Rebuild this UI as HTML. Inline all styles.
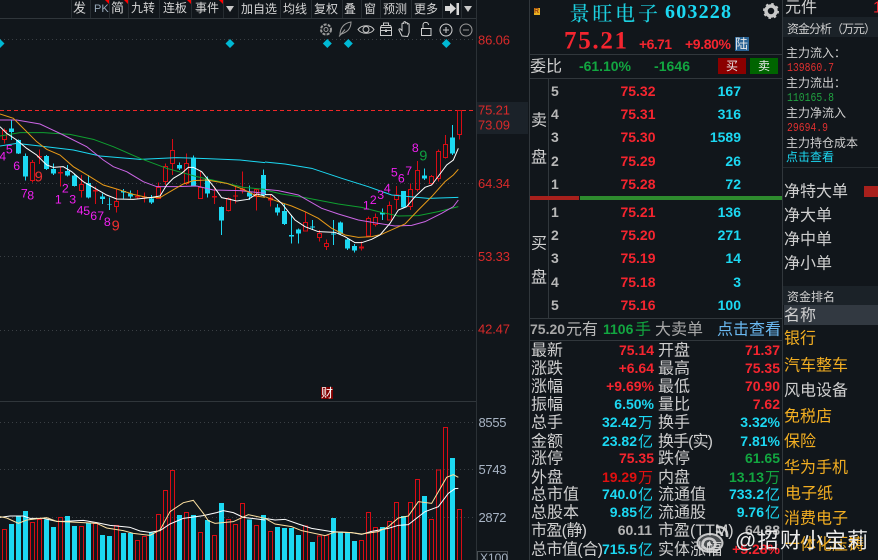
<!DOCTYPE html>
<html><head><meta charset="utf-8"><style>
html,body{margin:0;padding:0;background:#11161b;width:878px;height:560px;overflow:hidden}
svg{display:block;position:absolute;left:0;top:0}
text{font-family:"WenQuanYi Zen Hei","Liberation Sans","Noto Sans CJK SC",sans-serif;dominant-baseline:central;fill:#cfcfcf}
.n{font-family:"Liberation Sans",sans-serif;font-weight:700;font-size:14px}
.a{font-family:"Liberation Sans",sans-serif;font-size:13px;fill:#d82a2a}
.b{font-family:"Liberation Sans",sans-serif;font-size:13px;fill:#a8b4c4}
.r{fill:#f5252f}.c{fill:#1cd8f2}.g{fill:#12a640}.e{text-anchor:end}
.l{font-size:16px}.t{font-size:12px;fill:#d4d4d4}
.o{fill:#f2ae22;font-size:16px}
.u{font-size:15px}
.m{font-family:"Liberation Sans",sans-serif;font-size:37px;fill:#f020f0}
.s{font-size:12px;font-family:"Liberation Mono",monospace}
.h{font-size:12px}
</style></head><body>
<svg width="878" height="560" viewBox="0 0 878 560" xmlns="http://www.w3.org/2000/svg">
<rect width="878" height="560" fill="#11161b"/>
<!-- grid -->
<g stroke="#3a3f44" stroke-width="1" stroke-dasharray="1 3" fill="none">
<path d="M0 39.5H476M0 183.5H476M0 256.5H476M0 330.5H476M0 422.5H476M0 469.5H476M0 517.5H476"/>
</g>
<path d="M0 18.5H476M0 401.5H476" stroke="#30363b"/>
<path d="M476.5 0V560" stroke="#2b3136"/>
<rect x="477" y="102" width="51" height="32" fill="#1b2229"/>
<path d="M0 110.5H476" stroke="#f02828" stroke-dasharray="4 3"/>
<!-- toolbar -->
<path d="M71.500 0V18M90.500 0V18M109.500 0V18M128.500 0V18M159.500 0V18M191.500 0V18M223.500 0V18M238.500 0V18M280.500 0V18M311.500 0V18M342.500 0V18M361.500 0V18M380.500 0V18M411.500 0V18M442.500 0V18M461.500 0V18" stroke="#262c31"/>
<g>
<text class="t" x="73" y="8" style="font-size:13px">发</text>
<text x="94" y="9" style="font-size:11px;font-family:'Liberation Sans',sans-serif;fill:#9ab">PK</text>
<text class="t" x="111" y="8" style="font-size:13px">简</text>
<text class="t" x="131" y="8">九转</text>
<text class="t" x="163" y="8">连板</text><text class="t" x="195" y="8">事件</text>
<text class="t" x="241" y="9">加自选</text><text class="t" x="283" y="9">均线</text><text class="t" x="314" y="9">复权</text>
<text class="t" x="344" y="9">叠</text><text class="t" x="364" y="9">窗</text><text class="t" x="383" y="9">预测</text><text class="t" x="414" y="9">更多</text>
</g>
<path d="M105 0h4v4zM124 0h4v4zM187 0h4v4zM219 0h4v4" fill="#f00"/>
<path d="M226 6h8l-4 6zM464 6h8l-4 6z" fill="#c8c8c8"/>
<path d="M445 6h5v-3l6 5.500-6 5.500v-3h-5z" fill="#d8d8d8"/><rect x="456.500" y="3" width="2.500" height="12" fill="#d8d8d8"/>
<!-- tool icons -->
<g fill="none" stroke="#9a9a9a" stroke-width="1">
<circle cx="326" cy="29.500" r="5" stroke-width="2" stroke-dasharray="3 1.200"/><circle cx="326" cy="29.500" r="2"/>
<path d="M340 35c0-7 4-12 11-13 0 7-4 10-9.500 12z"/><path d="M339 36.500l6-7"/>
<path stroke="#c8c8c8" d="M358 29.500c3.500-5 13-5 16 0c-3 5-12.500 5-16 0z"/><circle stroke="#c8c8c8" cx="366" cy="29.500" r="3"/>
<path stroke="#c8c8c8" d="M380.500 27.500h11v8h-11zM380.500 27.500l1-2h9l1 2M383.500 25.500v-2.500h5v2.500M380.500 30.500h11M385.500 29.500v2h1v-2"/>
<path stroke="#d0d0d0" d="M402 36l-3-6c-.5-1.500 1-1.500 2-.5l1 1v-6.500c0-1.200 1.800-1.200 1.800 0v-1.500c0-1.200 1.800-1.200 1.800 0v1c0-1.200 1.800-1.200 1.800 0v1c0-1.200 1.700-1.200 1.700 0v8l-1.500 4z"/>
<path stroke="#d0d0d0" d="M421.500 28.500h9.500v7h-9.500zM423 28v-3c0-3.500 5.500-3.500 5.500 0"/>
<circle stroke="#d0d0d0" cx="446" cy="30" r="6"/><path stroke="#d0d0d0" d="M443 30h6M446 27v6"/>
<circle cx="466" cy="30" r="6"/><path d="M463 30h6"/>
</g>
<path d="M0 39l4.500 4.500-4.500 4.500zM230 39l4.500 4.500-4.500 4.500-4.500-4.500zM327.300 39l4.500 4.500-4.500 4.500-4.500-4.500zM348.300 39l4.500 4.500-4.500 4.500-4.500-4.500zM446.300 39l4.500 4.500-4.500 4.500-4.500-4.500z" fill="#00b8d4"/>
<!-- axis labels -->
<text class="a" x="478" y="40" textLength="32">86.06</text><text class="a" x="478" y="110" textLength="32">75.21</text><text class="a" x="478" y="125" textLength="32">73.09</text>
<text class="a" x="478" y="183.500" textLength="32">64.34</text><text class="a" x="478" y="256.500" textLength="32">53.33</text><text class="a" x="478" y="329" textLength="32">42.47</text>
<text class="b" x="478.500" y="422.500" textLength="28">8555</text><text class="b" x="478.500" y="469.500" textLength="28">5743</text><text class="b" x="478.500" y="517.500" textLength="28">2872</text>
<rect x="477.500" y="551.500" width="30" height="12" fill="none" stroke="#4a5055"/><text class="b" x="480" y="558" style="font-size:12px">X100</text>
<rect x="321" y="387" width="12" height="12" fill="#800000"/><text x="321" y="393" style="font-size:12px;fill:#fff">财</text>

<!-- candles left -->
<g transform="translate(0,110) scale(.33333)" fill="none" shape-rendering="crispEdges">
<path stroke="#1cd8f2" stroke-width="3" d="M34 30V90M202 165V200M265 195V265M307 250V282M328 262V300M370 237V265M391 242V265M454 255V282M538 157V180M580 137V230M622 200V262M664 290V375M748 226V270M790 178V260M160 160V195M139 135V180M223 190V230M76 130V212M55 88V132"/>
<path stroke="#1cd8f2" stroke-width="15" d="M34 55V66M55 90V130M76 138V200M139 138V177M160 177V191M202 183V197M223 196V228M265 219V263M307 259V267M370 243V247M391 250V260M454 266V278M538 165V175M580 143V230M622 207V250M664 291V332M748 247V260M790 195V255M328 283V285"/>
<path stroke="#d80c14" stroke-width="3" d="M13 55V62M13 88V100M97 150V157M97 212V218M118 118V162M181 170V230M244 195V223M244 241V262M286 230V282M349 237V274M349 290V307M412 240V267M433 247V278M475 217V232M496 160V170M496 215V225M517 87V121M517 160V195M559 130V160M559 220V225M601 185V232M643 230V282M685 262V266M685 302V305M706 230V280M727 185V250M769 237V302"/>
<path stroke="#d80c14" stroke-width="3" d="M7 62h12v26H7zM91 157h12v55H91zM238 223h12v18h-12zM343 274h12v16h-12zM469 232h12v33h-12zM490 170h12v45h-12zM511 121h12v39h-12zM553 160h12v60h-12zM595 232h12v34h-12zM679 266h12v36h-12zM763 238h12v22h-12z"/>
<path stroke="#d80c14" stroke-width="15" d="M118 138V143M181 186V190M286 240V244M412 258V262M433 259V262M643 258V263M706 256V260M727 236V241"/>
<g stroke-width="3" shape-rendering="auto">
<path stroke="#1cd8f2" d="M0 108L50 100L120 108L220 120L300 138L420 148L530 143L620 146L720 150L795 158"/>
<path stroke="#0fa030" d="M0 78L60 68L130 68L210 73L280 88L340 110L420 145L500 175L590 200L660 215L730 232L795 238"/>
<path stroke="#cc66e6" d="M0 30L50 30L120 42L190 75L260 110L310 150L340 170L380 185L430 215L470 230L530 230L590 228L640 240L720 242L795 250"/>
<path stroke="#e89a18" d="M0 12L40 25L60 45L85 70L110 95L140 118L180 135L220 170L270 200L310 225L350 237L400 253L440 262L480 263L510 245L550 222L580 212L620 210L680 220L730 238L770 258L795 262"/>
<path stroke="#fff" d="M0 50L20 70L50 90L80 115L110 135L140 165L160 172L190 170L215 185L250 215L285 235L320 255L350 267L400 268L450 263L480 258L500 225L520 205L545 190L565 172L580 172L605 185L625 210L645 235L665 263L690 268L710 273L745 268L770 252L795 258"/>
</g>
</g>
<!-- candles right -->
<g transform="translate(265,100) scale(.33333)" fill="none" shape-rendering="crispEdges">
<path stroke="#1cd8f2" stroke-width="3" d="M37 312V347M58 310V375M79 345V430M100 385V430M142 360V390M205 360V435M226 365V405M247 415V450M268 432V458M352 325V360M415 273V325M478 205V240M562 75V165"/>
<path stroke="#1cd8f2" stroke-width="15" d="M37 322V338M58 333V372M79 405V410M100 388V401M142 380V383M205 400V403M226 367V402M247 418V446M268 438V452M352 337V343M415 273V323M478 226V236M562 112V160"/>
<path stroke="#d80c14" stroke-width="3" d="M16 285V320M121 335V367M163 390V400M163 412V425M184 418V431M184 440V450M289 425V452M310 350V355M310 408V410M331 340V353M331 373V380M373 305V317M373 360V362M394 258V285M394 298V328M436 250V268M436 320V330M457 183V211M457 268V275M499 225V230M499 250V255M520 148V155M520 235V245M541 105V133M541 172V175M583 30V32M583 103V118"/>
<path stroke="#d80c14" stroke-width="3" d="M115 367h12v26h-12zM157 400h12v12h-12zM178 431h12v9h-12zM304 355h12v53h-12zM325 353h12v20h-12zM367 317h12v43h-12zM388 285h12v13h-12zM430 268h12v52h-12zM451 211h12v57h-12zM493 230h12v20h-12zM514 155h12v80h-12zM535 133h12v39h-12zM577 32h12v71h-12z"/>
<path stroke="#d80c14" stroke-width="15" d="M16 292V302M289 440V445"/>
<g stroke-width="3" shape-rendering="auto">
<path stroke="#1cd8f2" d="M0 186L60 192L140 205L230 235L310 260L380 285L490 295L580 292"/>
<path stroke="#0fa030" d="M0 270L50 282L120 293L220 312L290 322L340 335L400 348L460 347L520 335L580 320"/>
<path stroke="#cc66e6" d="M0 268L40 272L100 285L170 325L220 342L280 360L340 370L390 378L440 376L480 365L530 340L565 320L580 300"/>
<path stroke="#e89a18" d="M0 290L40 305L80 318L120 335L160 355L200 385L240 405L280 412L320 410L350 403L390 385L420 372L460 330L500 290L540 245L565 225L580 208"/>
<path stroke="#fff" d="M0 284L20 284L50 310L90 360L120 380L160 395L210 397L240 410L270 428L290 428L320 418L345 405L375 370L400 330L425 320L450 290L480 262L500 255L525 222L545 195L565 180L580 145"/>
</g>
</g>
<!-- magic numbers -->
<g transform="translate(0,110) scale(.33333)" text-anchor="middle">
<text class="m" x="8" y="140">4</text><text class="m" x="28" y="118">5</text><text class="m" x="50" y="168">6</text><text class="m" x="73" y="250">7</text><text class="m" x="92" y="256">8</text>
<text class="m" x="116" y="203" style="fill:#f03030;font-size:44px">9</text><text class="m" x="175" y="268">1</text><text class="m" x="196" y="235">2</text><text class="m" x="218" y="268">3</text>
<text class="m" x="240" y="302">4</text><text class="m" x="260" y="303">5</text><text class="m" x="281" y="318">6</text><text class="m" x="302" y="318">7</text><text class="m" x="322" y="336">8</text>
<text class="m" x="347" y="349" style="fill:#f03030;font-size:44px">9</text>
</g>
<g transform="translate(265,100) scale(.33333)" text-anchor="middle">
<text class="m" x="304" y="316">1</text><text class="m" x="325" y="300">2</text><text class="m" x="347" y="285">3</text><text class="m" x="367" y="265">4</text><text class="m" x="388" y="218">5</text><text class="m" x="409" y="235">6</text><text class="m" x="431" y="213">7</text><text class="m" x="451" y="144">8</text>
<text class="m" x="475" y="170" style="fill:#0fa040;font-size:44px">9</text>
</g>
<!-- volume left -->
<g transform="translate(0,380) scale(.33333)" fill="none" shape-rendering="crispEdges">
<path stroke="#1cd8f2" stroke-width="15" d="M34 432V540M55 406V540M76 393V540M139 418V540M160 441V540M202 408V540M223 438V540M265 429V540M307 465V540M328 468V540M370 459V540M391 459V540M454 458V540M538 405V540M580 405V540M622 420V540M664 369V540M748 418V540M790 405V540"/>
<path stroke="#d80c14" stroke-width="3" d="M7 540V448h12V540M91 540V427h12V540M112 540V418h12V540M175 540V412h12V540M238 540V439h12V540M280 540V430h12V540M343 540V437h12V540M406 540V481h12V540M427 540V469h12V540M469 540V403h12V540M490 540V331h12V540M511 540V271h12V540M553 540V397h12V540M595 540V457h12V540M637 540V466h12V540M679 540V418h12V540M700 540V433h12V540M721 540V370h12V540M763 540V436h12V540"/>
<g stroke-width="3" shape-rendering="auto">
<path stroke="#fff" d="M0 412L30 408L70 408L90 415L130 415L170 424L190 424L250 421L290 428L330 436L390 442L420 453L450 457L480 452L510 432L550 415L610 407L650 398L670 392L700 398L730 412L795 420"/>
<path stroke="#fde0a0" d="M0 410L20 414L55 430L80 420L140 413L170 424L250 428L290 430L320 444L370 452L400 460L450 466L480 450L510 395L550 368L580 361L610 400L625 422L645 430L700 425L745 404L795 415"/>
</g>
</g>
<!-- volume right -->
<g transform="translate(265,380) scale(.33333)" fill="none" shape-rendering="crispEdges">
<path stroke="#1cd8f2" stroke-width="15" d="M37 441V540M58 444V540M79 444V540M100 465V540M142 486V540M205 414V540M226 455V540M247 458V540M268 483V540M352 441V540M415 408V540M478 348V540M562 234V540"/>
<path stroke="#d80c14" stroke-width="3" d="M10 540V454h12V540M115 540V438h12V540M157 540V468h12V540M178 540V467h12V540M283 540V481h12V540M304 540V397h12V540M325 540V442h12V540M367 540V424h12V540M388 540V367h12V540M430 540V367h12V540M451 540V298h12V540M493 540V418h12V540M514 540V270h12V540M535 540V142h12V540M577 540V388h12V540"/>
<g stroke-width="3" shape-rendering="auto">
<path stroke="#fff" d="M0 415L30 420L60 418L100 432L140 445L200 455L260 458L290 463L320 454L370 445L400 436L430 434L480 395L520 380L550 340L570 326L580 325"/>
<path stroke="#fde0a0" d="M0 415L30 432L80 440L110 452L180 467L210 456L260 458L290 462L340 455L370 440L400 414L430 408L460 365L500 370L545 292L565 284L580 292"/>
</g>
</g>

<!-- order panel -->
<rect x="528" y="0" width="254" height="560" fill="#11161b"/>
<path d="M529.500 0V560M782.500 0V560M548.500 78V318" stroke="#31373c"/>
<path d="M530 54.500H782M530 78.500H782M530 318.500H782M530 340.500H782" stroke="#31373c"/>
<rect x="534" y="8" width="6" height="7" fill="#e8b020"/><text x="534" y="11.500" style="font-size:7px;fill:#a04010;font-family:'Liberation Sans';font-weight:700">R</text>
<text x="569.500" y="12" style="font-family:'Noto Serif CJK SC',serif;font-size:20px;fill:#1cd0e0;font-weight:500" textLength="88.500">景旺电子</text>
<text x="665" y="12" style="font-family:'Liberation Serif',serif;font-size:20px;fill:#1cd8f2;font-weight:700" textLength="66">603228</text>
<circle cx="771" cy="11" r="5" fill="none" stroke="#c8c8c8" stroke-width="3.500"/><circle cx="771" cy="11" r="7" fill="none" stroke="#c8c8c8" stroke-width="2" stroke-dasharray="2.500 3"/>
<text x="564" y="41" textLength="63" style="font-family:'Liberation Serif',serif;font-size:25px;font-weight:700;fill:#f5252f">75.21</text>
<text class="n r" x="639" y="44" textLength="33">+6.71</text><text class="n r" x="685" y="44" textLength="46">+9.80%</text>
<rect x="735" y="37" width="14" height="14" fill="#2a6496"/><text x="735" y="44" style="font-size:13px;fill:#e8e8e8">陆</text>
<text class="l" x="530" y="67">委比</text>
<text class="n g" x="579" y="66" textLength="52">-61.10%</text><text class="n g" x="654" y="66" textLength="36">-1646</text>
<rect x="718" y="58" width="28" height="16" fill="#8b0000"/><rect x="750" y="58" width="28" height="16" fill="#006400"/>
<text x="726" y="66" style="font-size:12px;fill:#e8e8e8">买</text><text x="758" y="66" style="font-size:12px;fill:#e8e8e8">卖</text>
<text class="l" x="531" y="121">卖</text><text class="l" x="531" y="158">盘</text><text class="l" x="531" y="244">买</text><text class="l" x="531" y="278">盘</text>

<g>
<text class="n" x="551" y="91" style="fill:#b8b8b8">5</text><text class="n" x="551" y="114" style="fill:#b8b8b8">4</text><text class="n" x="551" y="137" style="fill:#b8b8b8">3</text><text class="n" x="551" y="161" style="fill:#b8b8b8">2</text><text class="n" x="551" y="184" style="fill:#b8b8b8">1</text>
<text class="n" x="551" y="212" style="fill:#b8b8b8">1</text><text class="n" x="551" y="235" style="fill:#b8b8b8">2</text><text class="n" x="551" y="258" style="fill:#b8b8b8">3</text><text class="n" x="551" y="282" style="fill:#b8b8b8">4</text><text class="n" x="551" y="305" style="fill:#b8b8b8">5</text>
</g>
<g text-anchor="end">
<text class="n r" x="655.500" y="91">75.32</text><text class="n c" x="741" y="91">167</text>
<text class="n r" x="655.500" y="114">75.31</text><text class="n c" x="741" y="114">316</text>
<text class="n r" x="655.500" y="137">75.30</text><text class="n c" x="741" y="137">1589</text>
<text class="n r" x="655.500" y="161">75.29</text><text class="n c" x="741" y="161">26</text>
<text class="n r" x="655.500" y="184">75.28</text><text class="n c" x="741" y="184">72</text>
<text class="n r" x="655.500" y="212">75.21</text><text class="n c" x="741" y="212">136</text>
<text class="n r" x="655.500" y="235">75.20</text><text class="n c" x="741" y="235">271</text>
<text class="n r" x="655.500" y="258">75.19</text><text class="n c" x="741" y="258">14</text>
<text class="n r" x="655.500" y="282">75.18</text><text class="n c" x="741" y="282">3</text>
<text class="n r" x="655.500" y="305">75.16</text><text class="n c" x="741" y="305">100</text>
</g>
<rect x="530" y="196" width="49" height="4" fill="#a8201c"/><rect x="580" y="196" width="202" height="4" fill="#2e8b2e"/>
<text class="n" x="530" y="329" style="fill:#a8a8a8">75.20</text><text class="l" x="566" y="330" style="fill:#b8b8b8">元有</text>
<text class="n g" x="603" y="329">1106</text><text class="l" x="635" y="330" style="fill:#12a640">手</text>
<text class="l" x="655" y="330" style="fill:#a8a8a8">大卖单</text><text class="l" x="717" y="330" style="fill:#6ab8f0">点击查看</text>

<g transform="translate(0,1)">
<text class="l" x="531" y="350">最新</text><text class="l" x="531" y="368">涨跌</text><text class="l" x="531" y="386">涨幅</text><text class="l" x="531" y="404">振幅</text><text class="l" x="531" y="422">总手</text><text class="l" x="531" y="441">金额</text><text class="l" x="531" y="458">涨停</text><text class="l" x="531" y="477">外盘</text><text class="l" x="531" y="494">总市值</text><text class="l" x="531" y="512">总股本</text><text class="l" x="531" y="530" textLength="56">市盈(静)</text><text class="l" x="531" y="549" textLength="72">总市值(合)</text>
<text class="l" x="658" y="350">开盘</text><text class="l" x="658" y="368">最高</text><text class="l" x="658" y="386">最低</text><text class="l" x="658" y="404">量比</text><text class="l" x="658" y="422">换手</text><text class="l" x="658" y="441" textLength="55">换手(实)</text><text class="l" x="658" y="458">跌停</text><text class="l" x="658" y="477">内盘</text><text class="l" x="658" y="494">流通值</text><text class="l" x="658" y="512">流通股</text><text class="l" x="658" y="530">市盈(TTM)</text><text class="l" x="658" y="549">实体涨幅</text>
</g>
<g text-anchor="end">
<text class="n r" x="654" y="350">75.14</text><text class="n r" x="654" y="368">+6.64</text><text class="n r" x="654" y="386">+9.69%</text><text class="n c" x="654" y="404">6.50%</text>
<text class="n c" x="637" y="422">32.42</text><text class="n c" x="637" y="441">23.82</text><text class="n r" x="654" y="458">75.35</text><text class="n" x="637" y="477" style="fill:#e01010">19.29</text>
<text class="n c" x="637" y="494">740.0</text><text class="n c" x="637" y="512">9.85</text><text class="n" x="652" y="530" style="fill:#b4b4b4">60.11</text><text class="n c" x="637" y="549">715.5</text>
<text class="n r" x="780" y="350">71.37</text><text class="n r" x="780" y="368">75.35</text><text class="n r" x="780" y="386">70.90</text><text class="n r" x="780" y="404">7.62</text>
<text class="n c" x="780" y="422">3.32%</text><text class="n c" x="780" y="441">7.81%</text><text class="n g" x="780" y="458">61.65</text><text class="n g" x="764" y="477">13.13</text>
<text class="n c" x="764" y="494">733.2</text><text class="n c" x="764" y="512">9.76</text><text class="n" x="780" y="530" style="fill:#b4b4b4">64.88</text><text class="n r" x="780" y="549">+5.28%</text>
</g>
<g transform="translate(0,1)">
<text class="u" x="638" y="422" style="fill:#1cd8f2">万</text><text class="u" x="638" y="441" style="fill:#1cd8f2">亿</text><text class="u" x="638" y="477" style="fill:#e01010">万</text>
<text class="u" x="638" y="494" style="fill:#1cd8f2">亿</text><text class="u" x="638" y="512" style="fill:#1cd8f2">亿</text><text class="u" x="638" y="549" style="fill:#1cd8f2">亿</text>
<text class="u" x="765" y="477" style="fill:#12a640">万</text><text class="u" x="765" y="494" style="fill:#1cd8f2">亿</text><text class="u" x="765" y="512" style="fill:#1cd8f2">亿</text>
</g>

<!-- right panel -->
<text class="l" x="785" y="8">元件</text><text class="l" x="873" y="8" style="fill:#f5252f">1</text>
<rect x="783" y="17" width="95" height="20" fill="#1b2228"/>
<text class="h" x="787" y="29" textLength="89">资金分析（万元）</text>
<g transform="translate(0,1)">
<text class="h" x="786" y="52">主力流入：</text>
<text class="h" x="786" y="82">主力流出：</text>
<text class="h" x="786" y="112">主力净流入</text>
<text class="h" x="786" y="142">主力持仓成本</text><text class="h" x="786" y="156" style="fill:#1cd8f2">点击查看</text>
</g>
<text class="s" x="787" y="68" textLength="47" lengthAdjust="spacingAndGlyphs" style="fill:#e03030">139860.7</text>
<text class="s" x="787" y="98" textLength="47" lengthAdjust="spacingAndGlyphs" style="fill:#20a040">110165.8</text>
<text class="s" x="787" y="128" textLength="41" lengthAdjust="spacingAndGlyphs" style="fill:#e03030">29694.9</text>
<path d="M783 167.500H878" stroke="#262c31"/>
<g transform="translate(0,1)">
<text class="l" x="784" y="191">净特大单</text>
<text class="l" x="784" y="215">净大单</text><text class="l" x="784" y="239">净中单</text><text class="l" x="784" y="263">净小单</text>
</g>
<rect x="864" y="186" width="14" height="11" fill="#a8201c"/>
<rect x="783" y="286" width="95" height="19" fill="#1b2228"/><text class="h" x="787" y="297">资金排名</text>
<rect x="784" y="305" width="94" height="20" fill="#323941"/>
<g transform="translate(0,1)">
<text class="l" x="784" y="315">名称</text>
<text class="o" x="784" y="338">银行</text><text class="o" x="784" y="365">汽车整车</text><text class="l" x="784" y="390">风电设备</text><text class="o" x="784" y="416">免税店</text><text class="o" x="784" y="441">保险</text><text class="o" x="784" y="467">华为手机</text><text class="o" x="785" y="493">电子纸</text><text class="o" x="784" y="518">消费电子</text><text class="o" x="784" y="544">一体化压铸</text>
</g>

<!-- watermark -->
<g fill="none" stroke="#d8d8d8" stroke-opacity=".9">
<ellipse cx="710" cy="543" rx="12.500" ry="9" stroke-width="2" fill="#d0d0d0" fill-opacity=".3"/>
<ellipse cx="709" cy="544" rx="6.500" ry="5.500" stroke-width="2.500"/>
<path d="M716 527c7-1 12 3 11 10M716 532c3-1 6 1 6 4" stroke-width="2.500"/>
</g>
<circle cx="709" cy="544" r="2" fill="#d8d8d8"/>
<text x="735" y="541" style="font-size:21px;fill:#ececec;font-family:'Liberation Sans','WenQuanYi Zen Hei',sans-serif" textLength="133">@招财小宝莉</text>
</svg>
</body></html>
